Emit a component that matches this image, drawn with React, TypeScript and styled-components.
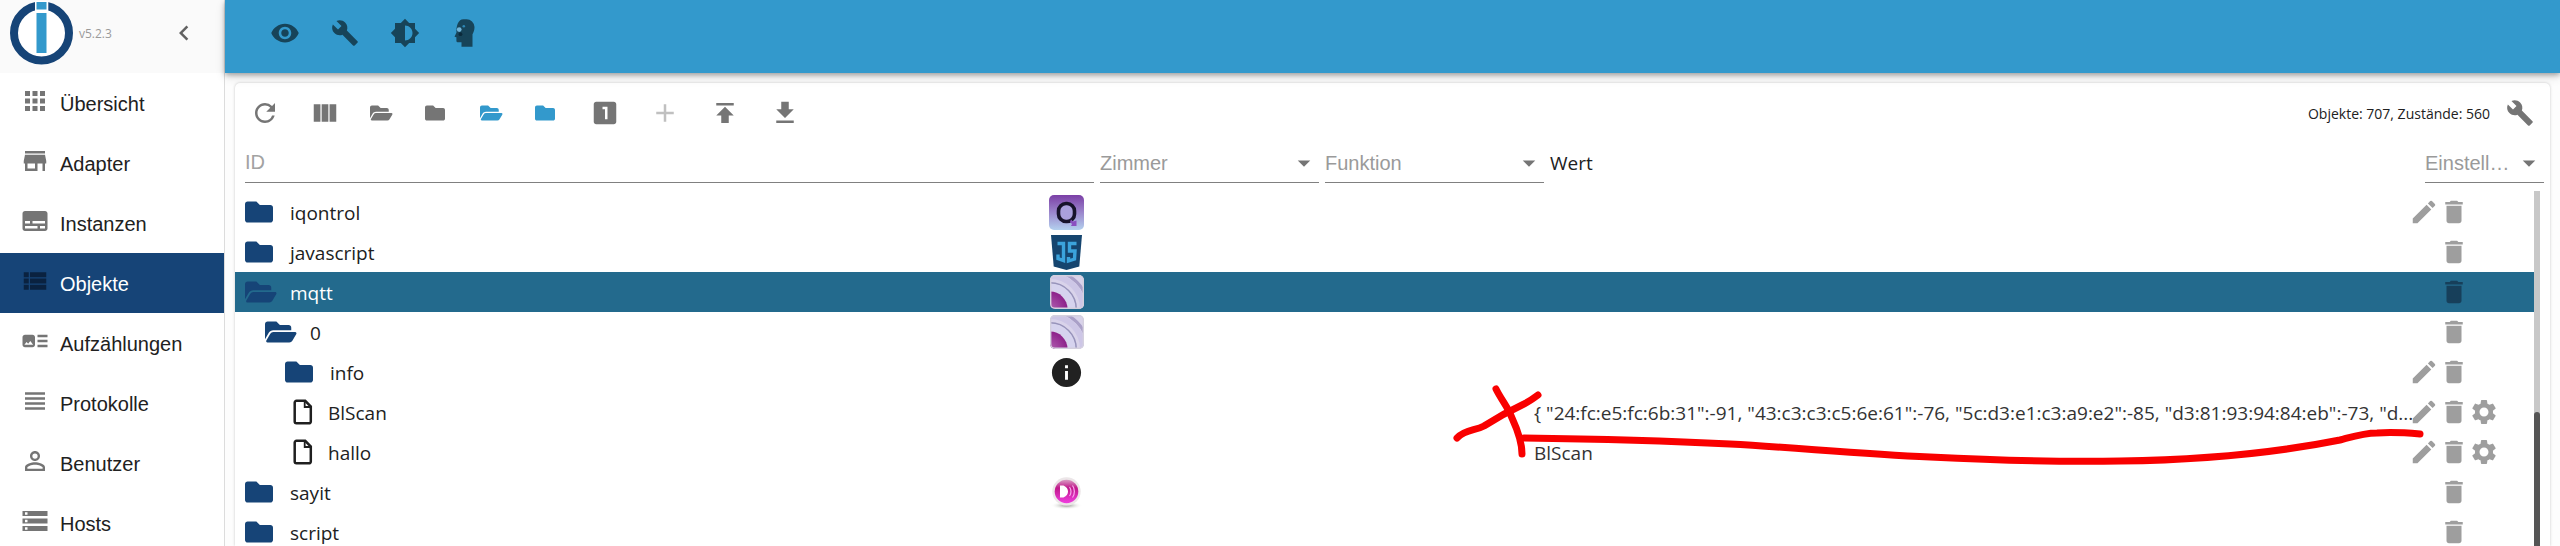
import React from "react";
import styled, { createGlobalStyle } from "styled-components";
import {
  MdApps,
  MdStore,
  MdSubtitles,
  MdViewList,
  MdArtTrack,
  MdViewHeadline,
  MdPersonOutline,
  MdStorage,
  MdVisibility,
  MdBuild,
  MdBrightness6,
  MdChevronLeft,
  MdRefresh,
  MdViewColumn,
  MdLooksOne,
  MdAdd,
  MdEdit,
  MdDelete,
  MdSettings,
  MdInfo,
  MdArrowDropDown,
} from "react-icons/md";

const navy = "#164477";
const sky = "#3399cc";
const sans = `"Liberation Sans", Arial, sans-serif`;
const humanist = `"Open Sans", "Segoe UI", sans-serif`;

const GlobalStyle = createGlobalStyle`
  * { box-sizing: border-box; }
  body { margin: 0; overflow: hidden; background: #fdfdfd; color: #212121; font-family: ${humanist}; }
  button { border: 0; background: none; padding: 0; margin: 0; font: inherit; color: inherit; cursor: pointer; }
  svg { display: block; flex: none; }
`;

const Page = styled.div`
  display: flex;
  height: 100vh;
  overflow: hidden;
`;

const Sidebar = styled.aside`
  flex: none;
  width: 225px;
  background: #fff;
  border-right: 1px solid #dcdcdc;
`;

const SidebarHeader = styled.div`
  display: flex;
  align-items: center;
  height: 73px;
  padding: 0 25px 7px 10px;
  background: #fafafa;
`;

const Version = styled.span`
  flex: 1;
  padding-left: 6px;
  font-size: 12px;
  color: #9a9a9a;
`;

const IconButton = styled.button<{ $size?: number; $disabled?: boolean }>`
  display: flex;
  align-items: center;
  justify-content: center;
  width: ${(p) => p.$size ?? 60}px;
  height: ${(p) => p.$size ?? 60}px;
  opacity: ${(p) => (p.$disabled ? 0.45 : 1)};
`;

const NavItem = styled.a<{ $active?: boolean }>`
  display: flex;
  align-items: center;
  gap: 10px;
  height: 60px;
  padding: 2px 20px 0;
  font: 20px ${sans};
  text-decoration: none;
  color: ${(p) => (p.$active ? "#fff" : "#212121")};
  background: ${(p) => (p.$active ? navy : "transparent")};

  svg {
    color: ${(p) => (p.$active ? "#0a2240" : "#757575")};
    margin-bottom: 6px;
  }
`;

const Main = styled.main`
  flex: 1;
  min-width: 0;
  display: flex;
  flex-direction: column;
`;

const AppBar = styled.header`
  display: flex;
  flex: none;
  height: 73px;
  padding: 3px 30px;
  background: ${sky};
  color: #174459;
  position: relative;
  box-shadow: 0 2px 5px rgba(0, 0, 0, 0.3), 0 4px 10px rgba(0, 0, 0, 0.12);
`;

const Panel = styled.section`
  flex: 1;
  min-height: 0;
  display: flex;
  flex-direction: column;
  margin: 10px 10px 0;
  background: #fff;
  border-radius: 5px 5px 0 0;
  box-shadow: 0 0 3px rgba(0, 0, 0, 0.22);
`;

const Toolbar = styled.div`
  display: flex;
  align-items: center;
  flex: none;
  height: 60px;
  color: #757575;
`;

const FolderButton = styled.button<{ $accent?: boolean }>`
  width: 55px;
  height: 60px;
  padding-left: 15px;
  color: ${(p) => (p.$accent ? sky : "#757575")};
`;

const Summary = styled.span`
  margin-left: auto;
  font-size: 14px;
  color: #212121;
`;

const Filters = styled.div`
  display: grid;
  grid-template-columns: 849px 219px 219px 1fr 119px;
  column-gap: 6px;
  flex: none;
  height: 40px;
  margin-bottom: 8px;
  padding: 0 6px 0 10px;
`;

const FilterInput = styled.input`
  min-width: 0;
  height: 40px;
  padding: 0;
  border: 0;
  border-bottom: 1px solid #808080;
  outline: 0;
  background: none;
  font: 20px ${sans};

  &::placeholder {
    color: #a2a2a2;
    opacity: 1;
  }
`;

const SelectBox = styled.div`
  display: flex;
  align-items: center;
  border-bottom: 1px solid #808080;
  color: #757575;
`;

const FilterSelect = styled.select`
  flex: 1;
  min-width: 0;
  height: 39px;
  border: 0;
  padding: 0;
  appearance: none;
  background: none;
  outline: 0;
  font: 20px ${sans};
  color: #9a9a9a;
  text-overflow: ellipsis;
  overflow: hidden;
  white-space: nowrap;
`;

const ColumnTitle = styled.span`
  align-self: center;
  font-size: 19px;
`;

const TreeArea = styled.div`
  position: relative;
  display: flex;
  flex: 1;
  min-height: 0;
  padding-right: 10px;
`;

const Tree = styled.table`
  display: block;
  flex: 1;
  min-width: 0;
  margin-top: 1px;
  overflow: hidden;

  tbody {
    display: block;
  }
`;

const Row = styled.tr<{ $selected?: boolean }>`
  display: grid;
  grid-template-columns: 814px 35px 450px minmax(0, 1fr) 125px;
  align-items: center;
  height: 40px;
  font-size: 19px;
  color: ${(p) => (p.$selected ? "#fff" : "#212121")};
  background: ${(p) => (p.$selected ? "#236a8d" : "transparent")};
`;

const NameCell = styled.td<{ $level: number }>`
  display: flex;
  align-items: center;
  padding: 0 0 0 ${(p) => 10 + p.$level * 20}px;
`;

const Name = styled.span`
  padding-top: 2px;
`;

const FolderSlot = styled.span`
  width: 45px;
  color: ${navy};
`;

const FileSlot = styled.span`
  width: 43px;
  padding-left: 8px;
`;

const LogoCell = styled.td`
  display: flex;
  justify-content: center;
  padding: 0;
`;

const ValueCell = styled.td`
  grid-column: 4;
  padding: 2px 0 0;
  white-space: nowrap;
  color: #333;
`;

const ActionCell = styled.td<{ $selected?: boolean }>`
  grid-column: 5;
  display: grid;
  grid-template-columns: 30px 30px 30px;
  padding: 0;
  color: ${(p) => (p.$selected ? "#173f5a" : "#9e9e9e")};

  .remove {
    grid-column: 2;
  }
`;

const Track = styled.div`
  flex: none;
  width: 6px;
  background: #c8c8c8;
  padding-top: 221px;
`;

const Thumb = styled.div`
  height: 100%;
  border-radius: 3px 3px 0 0;
  background: #555;
`;

const Markup = styled.svg`
  position: absolute;
  top: 191px;
  left: 1215px;
  pointer-events: none;
`;

function BrokerLogo() {
  return (
    <svg width="63" height="64" viewBox="0 0 63 64">
      <circle cx="31.5" cy="32" r="27.5" fill="#fff" stroke={navy} strokeWidth="8" />
      <path d="M25 0h13.300v12H25z" fill="#fff" />
      <path d="M26.500 1h10v7.500h-10zM26.500 12h10v40h-10z" fill={sky} />
    </svg>
  );
}

function HeadIcon() {
  return (
    <svg width="30" height="30" viewBox="0 0 30 30">
      <path
        fill="currentColor"
        d="M13.500 1.200h2.800a8 8 0 0 1 8.200 7.800c0 3.200-.9 5-2 7.300v12.500H11.500v-4.500H8.300c-1.200 0-1.900-.6-1.900-1.600v-3.500l-1.900-.5 2-4.200c-.4-5.600 1.200-13.300 7-13.300z"
      />
      <circle cx="9.200" cy="11.600" r="2.400" fill="#72b4d8" />
      <circle cx="13.800" cy="8.300" r="1.300" fill={sky} opacity=".8" />
      <circle cx="10.500" cy="16.200" r="1.900" fill="#0b2a3b" />
    </svg>
  );
}

function FolderIcon({ open, size }: { open?: boolean; size: number }) {
  return open ? (
    <svg width={(size * 9) / 8} height={size} viewBox="0 0 576 512" fill="currentColor">
      <path d="M572.694 292.093L500.270 416.248A63.997 63.997 0 0 1 444.989 448H45.025c-18.523 0-30.064-20.093-20.731-36.093l72.424-124.155A64 64 0 0 1 152 256h399.964c18.523 0 30.064 20.093 20.730 36.093zM152 224h328v-48c0-26.510-21.490-48-48-48H272l-64-64H48C21.490 64 0 85.490 0 112v278.046l69.077-118.418C86.214 242.250 117.989 224 152 224z" />
    </svg>
  ) : (
    <svg width={size} height={size} viewBox="0 0 512 512" fill="currentColor">
      <path d="M464 128H272l-64-64H48C21.490 64 0 85.490 0 112v288c0 26.510 21.490 48 48 48h416c26.510 0 48-21.490 48-48V176c0-26.510-21.490-48-48-48z" />
    </svg>
  );
}

function FileIcon() {
  return (
    <svg width="20" height="26" viewBox="0 0 20 26" fill="none" stroke="#1f1f1f">
      <path d="M3.500 1.800h8.700l5.600 5.700v15a1.800 1.800 0 0 1-1.800 1.800H3.500a1.800 1.800 0 0 1-1.800-1.800V3.600a1.800 1.800 0 0 1 1.800-1.800z" strokeWidth="2.500" />
      <path d="M11.700 2v6h6" strokeWidth="1.800" />
    </svg>
  );
}

function UploadIcon() {
  return (
    <svg width="30" height="30" viewBox="0 0 24 24" fill="currentColor">
      <path d="M5 4v2h14V4H5zm0 10h4v6h6v-6h4l-7-7-7 7z" />
    </svg>
  );
}

function DownloadIcon() {
  return (
    <svg width="30" height="30" viewBox="0 0 24 24" fill="currentColor">
      <path d="M19 9h-4V3H9v6H5l7 7 7-7zM5 18v2h14v-2H5z" />
    </svg>
  );
}

function ControlLogo() {
  return (
    <svg width="35" height="35" viewBox="0 0 35 35">
      <defs>
        <linearGradient id="control-bg" x1="0" y1="0" x2="0" y2="1">
          <stop offset="0" stopColor="#7b3fa6" />
          <stop offset=".5" stopColor="#9b86cc" />
          <stop offset="1" stopColor="#b3d0ee" />
        </linearGradient>
      </defs>
      <rect width="35" height="35" rx="5" fill="url(#control-bg)" />
      <rect x="9.500" y="8.500" width="16" height="18" rx="7.500" fill="#aaa0dc" stroke="#17132a" strokeWidth="3.600" />
      <path d="M22 24.500l2 2 3.500-1v5.500h-5.500l1-2-2-2z" fill="#8b4fc0" />
    </svg>
  );
}

function ScriptLogo() {
  return (
    <svg width="31" height="35" viewBox="0 0 31 35">
      <path d="M0 0h31l-2.700 31.500L15.500 35 2.700 31.500z" fill="#15456f" />
      <path d="M6.500 8.500h6v17l-5.500-2v-4M25.500 8.500h-7v7.500h5.500l-.5 8-6 2v-4" fill="none" stroke="#3ba3dc" strokeWidth="3.400" />
    </svg>
  );
}

function MqttLogo({ id }: { id: string }) {
  return (
    <svg width="34" height="34" viewBox="0 0 34 34">
      <defs>
        <clipPath id={`${id}-clip`}>
          <rect width="34" height="34" rx="5" />
        </clipPath>
        <radialGradient id={`${id}-core`} cx="0" cy="34" r="18" gradientUnits="userSpaceOnUse">
          <stop offset="0" stopColor="#b05fb0" />
          <stop offset="1" stopColor="#8c2089" />
        </radialGradient>
      </defs>
      <g clipPath={`url(#${id}-clip)`}>
        <rect width="34" height="34" fill="#d9d3ea" />
        <circle cx="0" cy="34" r="38" fill="none" stroke="#aaa0c8" strokeWidth="3" />
        <circle cx="0" cy="34" r="33" fill="none" stroke="#cdc6e6" strokeWidth="6" />
        <circle cx="0" cy="34" r="26" fill="none" stroke="#9793ba" strokeWidth="2" />
        <circle cx="0" cy="34" r="22" fill="none" stroke="#d6d3ee" strokeWidth="7" />
        <circle cx="0" cy="34" r="17.500" fill={`url(#${id}-core)`} />
        <rect x=".7" y=".7" width="32.600" height="32.600" rx="4" fill="none" stroke="#d4d0de" strokeWidth="1.400" />
      </g>
    </svg>
  );
}

function SpeakLogo() {
  return (
    <svg width="35" height="35" viewBox="0 0 35 35">
      <defs>
        <linearGradient id="speak-ball" x1="0" y1="0" x2="0" y2="1">
          <stop offset="0" stopColor="#d9a0c4" />
          <stop offset=".35" stopColor="#c0188a" />
          <stop offset="1" stopColor="#f03fe0" />
        </linearGradient>
        <radialGradient id="speak-shadow">
          <stop offset="0" stopColor="#8a8f84" />
          <stop offset="1" stopColor="#fff" stopOpacity="0" />
        </radialGradient>
      </defs>
      <ellipse cx="17.500" cy="30.500" rx="16" ry="4" fill="url(#speak-shadow)" />
      <circle cx="17.500" cy="16.500" r="14.200" fill="#ece6e8" />
      <circle cx="17.500" cy="16.500" r="11.800" fill="url(#speak-ball)" />
      <path d="M11 10.500h3.500c6 2.500 6 9.500 0 12H11z" fill="#fff" />
      <path d="M20.500 12c2 2.500 2 6.500 0 9M23.500 10.500c2.500 3.500 2.500 8.500 0 12" fill="none" stroke="#f9a8ee" strokeWidth="1.200" />
    </svg>
  );
}

const navigation = [
  { label: "Übersicht", Icon: MdApps },
  { label: "Adapter", Icon: MdStore },
  { label: "Instanzen", Icon: MdSubtitles },
  { label: "Objekte", Icon: MdViewList, active: true },
  { label: "Aufzählungen", Icon: MdArtTrack },
  { label: "Protokolle", Icon: MdViewHeadline },
  { label: "Benutzer", Icon: MdPersonOutline },
  { label: "Hosts", Icon: MdStorage },
];

type Node = {
  name: string;
  level: number;
  kind: "folder" | "open" | "file";
  logo?: React.ReactNode;
  value?: string;
  editable?: boolean;
  selected?: boolean;
};

const nodes: Node[] = [
  { name: "iqontrol", level: 0, kind: "folder", logo: <ControlLogo />, editable: true },
  { name: "javascript", level: 0, kind: "folder", logo: <ScriptLogo /> },
  { name: "mqtt", level: 0, kind: "open", logo: <MqttLogo id="mqtt" />, selected: true },
  { name: "0", level: 1, kind: "open", logo: <MqttLogo id="mqtt-0" /> },
  { name: "info", level: 2, kind: "folder", logo: <MdInfo size={35} />, editable: true },
  {
    name: "BlScan",
    level: 2,
    kind: "file",
    editable: true,
    value:
      '{ "24:fc:e5:fc:6b:31":-91, "43:c3:c3:c5:6e:61":-76, "5c:d3:e1:c3:a9:e2":-85, "d3:81:93:94:84:eb":-73, "d...',
  },
  { name: "hallo", level: 2, kind: "file", editable: true, value: "BlScan" },
  { name: "sayit", level: 0, kind: "folder", logo: <SpeakLogo /> },
  { name: "script", level: 0, kind: "folder" },
];

function Filter({ label }: { label: string }) {
  return (
    <SelectBox>
      <FilterSelect aria-label={label}>
        <option>{label}</option>
      </FilterSelect>
      <MdArrowDropDown size={30} />
    </SelectBox>
  );
}

function TreeRow({ node }: { node: Node }) {
  return (
    <Row $selected={node.selected}>
      <NameCell $level={node.level}>
        {node.kind === "file" ? (
          <FileSlot>
            <FileIcon />
          </FileSlot>
        ) : (
          <FolderSlot>
            <FolderIcon open={node.kind === "open"} size={28} />
          </FolderSlot>
        )}
        <Name>{node.name}</Name>
      </NameCell>
      <LogoCell>{node.logo}</LogoCell>
      {node.value && <ValueCell>{node.value}</ValueCell>}
      <ActionCell $selected={node.selected}>
        {node.editable && (
          <IconButton $size={30} aria-label="Bearbeiten">
            <MdEdit size={30} />
          </IconButton>
        )}
        <IconButton className="remove" $size={30} aria-label="Löschen">
          <MdDelete size={30} />
        </IconButton>
        {node.kind === "file" && (
          <IconButton $size={30} aria-label="Konfigurieren">
            <MdSettings size={30} />
          </IconButton>
        )}
      </ActionCell>
    </Row>
  );
}

export default function App() {
  return (
    <Page>
      <GlobalStyle />
      <Sidebar>
        <SidebarHeader>
          <BrokerLogo />
          <Version>v5.2.3</Version>
          <IconButton $size={30} aria-label="Menü einklappen">
            <MdChevronLeft size={30} color="#616161" />
          </IconButton>
        </SidebarHeader>
        <nav>
          {navigation.map(({ label, Icon, active }) => (
            <NavItem key={label} href="#" $active={active}>
              <Icon size={30} />
              {label}
            </NavItem>
          ))}
        </nav>
      </Sidebar>
      <Main>
        <AppBar>
          <IconButton aria-label="Sichtbarkeit"><MdVisibility size={30} /></IconButton>
          <IconButton aria-label="Einstellungen"><MdBuild size={28} /></IconButton>
          <IconButton aria-label="Farbschema"><MdBrightness6 size={30} /></IconButton>
          <IconButton aria-label="Expertenmodus"><HeadIcon /></IconButton>
        </AppBar>
        <Panel>
          <Toolbar>
            <IconButton aria-label="Aktualisieren"><MdRefresh size={30} /></IconButton>
            <IconButton aria-label="Spalten"><MdViewColumn size={30} /></IconButton>
            <FolderButton aria-label="Alle öffnen"><FolderIcon open size={20} /></FolderButton>
            <FolderButton aria-label="Alle schließen"><FolderIcon size={20} /></FolderButton>
            <FolderButton $accent aria-label="Ebene öffnen"><FolderIcon open size={20} /></FolderButton>
            <FolderButton $accent aria-label="Ebene schließen"><FolderIcon size={20} /></FolderButton>
            <IconButton aria-label="Zustände zählen"><MdLooksOne size={30} /></IconButton>
            <IconButton $disabled aria-label="Hinzufügen"><MdAdd size={30} /></IconButton>
            <IconButton aria-label="Hochladen"><UploadIcon /></IconButton>
            <IconButton aria-label="Herunterladen"><DownloadIcon /></IconButton>
            <Summary>Objekte: 707, Zustände: 560</Summary>
            <IconButton aria-label="Werkzeuge"><MdBuild size={28} /></IconButton>
          </Toolbar>
          <Filters>
            <FilterInput placeholder="ID" aria-label="ID" />
            <Filter label="Zimmer" />
            <Filter label="Funktion" />
            <ColumnTitle>Wert</ColumnTitle>
            <Filter label="Einstellungen" />
          </Filters>
          <TreeArea>
            <Tree aria-label="Objekte">
              <tbody>
                {nodes.map((node) => (
                  <TreeRow key={node.name} node={node} />
                ))}
              </tbody>
            </Tree>
            <Track>
              <Thumb />
            </Track>
            <Markup width="980" height="80" viewBox="1450 382 980 80" overflow="visible" fill="none" stroke="#f90000" strokeWidth="7" strokeLinecap="round" strokeLinejoin="round">
              <path d="M1496 389C1502 401 1508 407 1512 418C1518 431 1522 442 1522 454" />
              <path d="M1457 438C1466 429 1475 431 1484 426C1498 417 1509 411 1524 404C1530 401 1534 398 1538 395" />
              <path d="M1524 438C1600 439 1670 441 1730 444C1800 448 1860 454 1930 457C1990 460 2060 462 2120 461C2200 460 2280 452 2340 440C2355 436 2364 433 2377 433C2393 432 2408 433 2420 434" />
            </Markup>
          </TreeArea>
        </Panel>
      </Main>
    </Page>
  );
}
